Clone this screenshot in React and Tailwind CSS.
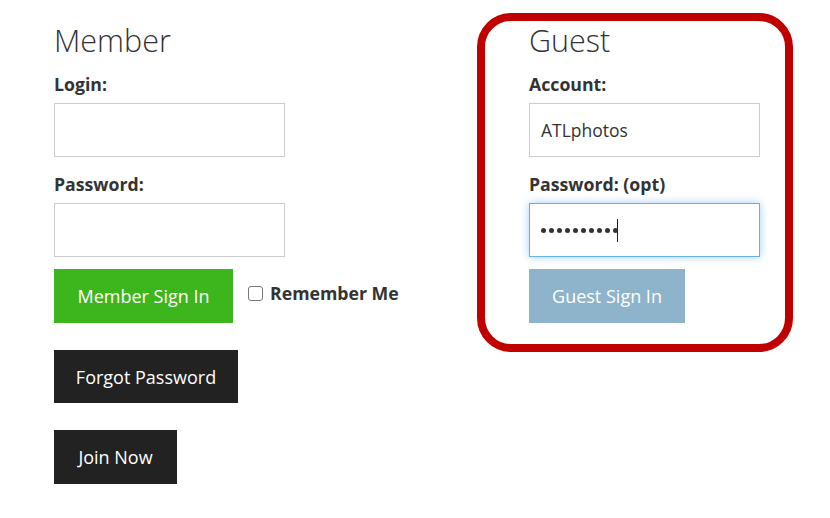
import React from "react";

const font = { fontFamily: '"Open Sans", "Noto Sans", "Liberation Sans", sans-serif' };

function Column({ title, children }) {
  return (
    <div className="flex flex-col items-start">
      <h2 className="h-[38px] text-[30.5px] leading-[38px] font-light text-[#333]">{title}</h2>
      {children}
    </div>
  );
}

export default function App() {
  return (
    <div className="w-[830px] h-[518px] bg-white overflow-hidden" style={font}>
      <div className="flex pt-[13px] pl-[54px]">
        <div className="w-[423px] pt-[8px]">
          <Column title="Member">
            <div className="mt-[13px] text-[17.7px] leading-[24px] font-bold text-[#333]">Login:</div>
            <input className="mt-[7px] w-[231px] h-[54px] border border-[#ccc] px-3 text-[17px] outline-none" />
            <div className="mt-[15px] text-[17.7px] leading-[24px] font-bold text-[#333]">Password:</div>
            <input type="password" className="mt-[7px] w-[231px] h-[54px] border border-[#ccc] px-3 text-[17px] outline-none" />
            <div className="mt-[12px] flex items-center">
              <button className="w-[179px] h-[54px] bg-[#3db51c] text-white text-[18px] leading-none">Member Sign In</button>
              <label className="ml-[15px] flex items-center -mt-[5px]">
                <span className="w-[15px] h-[15px] rounded-[3px] border border-[#767676] bg-white"></span>
                <span className="ml-[7px] text-[17.7px] font-bold text-[#333]">Remember Me</span>
              </label>
            </div>
            <button className="mt-[27px] w-[184px] h-[53px] bg-[#222] text-white text-[18px] leading-none">Forgot Password</button>
            <button className="mt-[27px] w-[123px] h-[54px] bg-[#222] text-white text-[18px] leading-none">Join Now</button>
          </Column>
        </div>
        <div className="w-[316px] h-[339px] border-[8px] border-[#c00000] rounded-[34px] pl-[44px]">
          <Column title="Guest">
            <div className="mt-[13px] text-[17.7px] leading-[24px] font-bold text-[#333]">Account:</div>
            <div className="mt-[7px] w-[231px] h-[54px] border border-[#ccc] pl-[11px] flex items-center text-[17.5px] text-[#333]">ATLphotos</div>
            <div className="mt-[15px] text-[17.7px] leading-[24px] font-bold text-[#333]">Password: (opt)</div>
            <div className="mt-[7px] w-[231px] h-[54px] border border-[#66afe9] shadow-[0_0_8px_rgba(102,175,233,0.6)] pl-[11px] flex items-center">
              <span className="flex items-center gap-[3px]">
                {Array.from({ length: 10 }).map((_, i) => (
                  <span key={i} className="w-[5px] h-[5px] rounded-full bg-[#333]"></span>
                ))}
              </span>
              <span className="ml-[-1px] w-[1px] h-[23px] bg-[#222]"></span>
            </div>
            <button className="mt-[12px] w-[156px] h-[54px] bg-[#8db4cb] text-white text-[18px] leading-none">Guest Sign In</button>
          </Column>
        </div>
      </div>
    </div>
  );
}
